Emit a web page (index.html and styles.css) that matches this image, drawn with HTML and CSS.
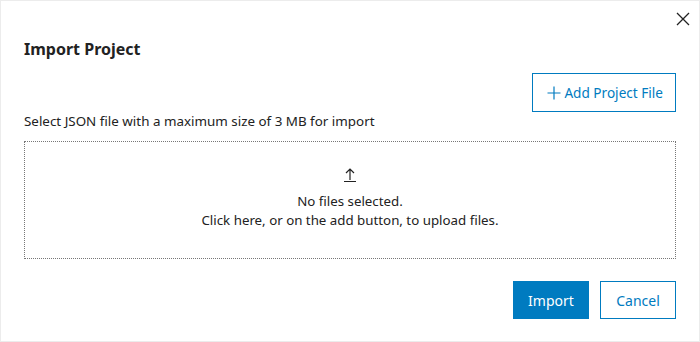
FILE: index.html
```html
<!DOCTYPE html>
<html lang="en">
<head>
    <meta charset="UTF-8">
    <meta name="viewport" content="width=device-width, initial-scale=1.0">
    <title>Import Project</title>
    <link rel="stylesheet" href="styles.css">
</head>
<body>

    <div class="dialog">
        <div class="dialog-top">
            <button class="close-btn" aria-label="Close">
                <svg width="14" height="14" viewBox="0 0 14 14">
                    <path d="M1 1 L13 13 M13 1 L1 13" stroke="#222" stroke-width="1.3" fill="none"/>
                </svg>
            </button>
        </div>

        <h2 class="title">Import Project</h2>

        <div class="add-row">
            <button class="btn btn-outline add-btn">
                <svg width="14" height="14" viewBox="0 0 14 14">
                    <path d="M7 0.5 V13.5 M0.5 7 H13.5" stroke="#007bc0" stroke-width="1.2" fill="none"/>
                </svg>
                Add Project File
            </button>
        </div>

        <p class="hint">Select JSON file with a maximum size of 3 MB for import</p>

        <div class="dropzone">
            <svg class="upload-icon" width="14" height="15" viewBox="0 0 14 15">
                <path d="M7 13 V2 M3 6 L7 2 L11 6" stroke="#222" stroke-width="1.2" fill="none"/>
                <path d="M1 14.5 H13" stroke="#222" stroke-width="1" fill="none"/>
            </svg>
            <div class="drop-text">
                No files selected.<br>
                Click here, or on the add button, to upload files.
            </div>
        </div>

        <div class="footer">
            <button class="btn btn-primary">Import</button>
            <button class="btn btn-outline">Cancel</button>
        </div>
    </div>

</body>
</html>
```

FILE: styles.css
```css
body {
    margin: 0;
    padding: 0;
    font-family: "Noto Sans", "Open Sans", sans-serif;
    color: #222;
    background-color: #fff;
}

.dialog {
    box-sizing: border-box;
    width: 700px;
    height: 342px;
    border: 1px solid #ececec;
    padding: 0 23px;
}

.dialog-top {
    display: flex;
    justify-content: flex-end;
    margin-right: -16px;
    padding-top: 9px;
    height: 27px;
}

.close-btn {
    width: 18px;
    height: 18px;
    padding: 2px;
    border: none;
    background: none;
    cursor: pointer;
}

.title {
    margin: 0;
    font-size: 16px;
    line-height: 24px;
    font-weight: bold;
}

.add-row {
    display: flex;
    justify-content: flex-end;
    margin-top: 12px;
}

.btn {
    box-sizing: border-box;
    height: 39px;
    padding: 0 16px;
    font-family: inherit;
    font-size: 14px;
    cursor: pointer;
}

.btn-outline {
    background-color: #fff;
    color: #007bc0;
    border: 1px solid #007bc0;
}

.btn-primary {
    background-color: #007bc0;
    color: #fff;
    border: 1px solid #007bc0;
}

.btn-primary:hover {
    background-color: #00629a;
}

.add-btn {
    display: flex;
    align-items: center;
    gap: 3px;
    padding: 0 12px 0 14px;
    font-size: 13.6px;
}

.hint {
    margin: -1px 0 0;
    font-size: 13.4px;
    line-height: 20px;
}

.dropzone {
    box-sizing: border-box;
    height: 118px;
    margin-top: 10px;
    padding-bottom: 4px;
    border: 1px dotted #777;
    display: flex;
    flex-direction: column;
    align-items: center;
    justify-content: center;
    gap: 10px;
    cursor: pointer;
}

.drop-text {
    font-size: 13.3px;
    line-height: 19px;
    text-align: center;
}

.footer {
    display: flex;
    justify-content: flex-end;
    gap: 11px;
    margin-top: 22px;
}

.footer .btn {
    width: 76px;
    height: 38px;
    padding: 0;
}
```
